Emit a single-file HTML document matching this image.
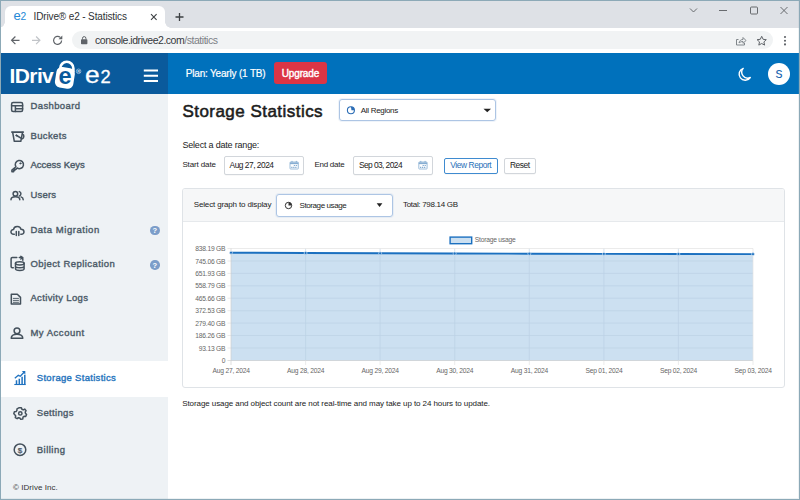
<!DOCTYPE html>
<html lang="en">
<head>
<meta charset="utf-8">
<title>IDrive e2 - Statistics</title>
<style>
*{box-sizing:border-box;margin:0;padding:0}
html,body{width:800px;height:500px;overflow:hidden;background:#fff}
body{font-family:"Liberation Sans",sans-serif;color:#222;position:relative}
.a{position:absolute}
.t{position:absolute;white-space:nowrap;line-height:1;font-family:"Liberation Sans",sans-serif}
.sb{-webkit-text-stroke:0.380px currentColor}
.b{font-weight:bold}
#tabstrip{left:0;top:0;width:800px;height:28px;background:#dee1e6}
#tab{left:5px;top:6px;width:160px;height:22px;background:#fff;border-radius:6px 6px 0 0}
#tab:before,#tab:after{content:"";position:absolute;bottom:0;width:6px;height:6px;background:radial-gradient(circle at 0 0,rgba(255,255,255,0) 5.500px,#fff 6px)}
#tab:before{left:-6px}
#tab:after{right:-6px;transform:scaleX(-1)}
#toolbar{left:0;top:28px;width:800px;height:25px;background:#fff}
#url{left:72px;top:31px;width:701px;height:18px;border-radius:9px;background:#f1f3f4}
#hdrL{left:0;top:53px;width:168px;height:40.500px;background:#0a5a9c}
#hdrR{left:168px;top:53px;width:632px;height:40.500px;background:#0071bc}
#upg{left:274px;top:62px;width:53px;height:22px;border-radius:3px;background:#dc3545}
#avatar{left:767.500px;top:63px;width:22px;height:22px;border-radius:50%;background:#fff}
#side{left:0;top:93.500px;width:167.500px;height:406.500px;background:#eef2f5}
#act{left:0;top:361px;width:167.500px;height:36px;background:#fff}
.q{width:9.500px;height:9.500px;border-radius:50%;background:#7b9dc9}
.sel{border:1px solid #adc5e4;border-radius:3px;background:#fff;box-shadow:0 0 0 1px rgba(168,195,226,.18)}
.inp{border:1px solid #d2d6db;box-shadow:0 0.500px 0.500px rgba(0,0,0,.06);border-radius:2px;background:#fff}
#card{left:182px;top:188px;width:603px;height:199.500px;border:1px solid #dfe3e7;border-radius:3px;background:#fff}
#cardh{left:0;top:0;width:601px;height:33px;background:#f6f7f8;border-bottom:1px solid #e6e9ec;border-radius:2px 2px 0 0}
#frame{left:0;top:0;width:800px;height:500px;border:1px solid #8ca9b7;box-shadow:inset -1px -1px 0 0 rgba(140,169,183,.15);pointer-events:none}
</style>
</head>
<body>
<div class="a" id="tabstrip"></div>
<div class="a" id="tab"></div>
<div class="a" id="toolbar"></div>
<div class="a" id="url"></div>
<div class="a" id="hdrL"></div>
<div class="a" id="hdrR"></div>
<div class="a" id="upg"></div>
<div class="a" id="avatar"></div>
<div class="a" id="side"></div>
<div class="a" id="act"></div>
<div class="a q" style="left:150px;top:225.500px"></div>
<div class="a q" style="left:150px;top:260px"></div>
<div class="a sel" style="left:339px;top:99px;width:157px;height:22px"></div>
<div class="a inp" style="left:224px;top:156px;width:80px;height:18.500px"></div>
<div class="a inp" style="left:353px;top:156px;width:80px;height:18.500px"></div>
<div class="a inp" style="left:443.500px;top:158px;width:54.500px;height:15.500px;border-color:#3f8bd0"></div>
<div class="a inp" style="left:504px;top:158px;width:32px;height:15.500px"></div>
<div class="a" id="card"><div class="a" id="cardh"></div></div>
<div class="a sel" style="left:276px;top:194px;width:117px;height:22.500px"></div>
<svg class="a" style="left:0;top:0" width="800" height="500" viewBox="0 0 800 500" fill="none">
<!-- browser chrome -->
<path d="M151 14.200L156.600 19.800M156.600 14.200L151 19.800" stroke="#3c4043" stroke-width="1.100"/>
<path d="M179.500 13V21M175.500 17H183.500" stroke="#3c4043" stroke-width="1.300"/>
<g stroke="#5a5d61" stroke-width="0.900">
<path d="M690 8.500L693.500 12L697 8.500"/>
<path d="M719 10.500H727"/>
<rect x="750.500" y="7" width="7" height="7" rx="1"/>
<path d="M780.500 7L787.500 14M787.500 7L780.500 14"/>
</g>
<g stroke="#5f6368" stroke-width="1.200">
<path d="M19.500 40.300H11.800M15.400 36.500L11.600 40.300L15.400 44.100"/>
<path d="M61.600 40.500A4 4 0 1 1 60.300 37.400"/>
</g>
<path d="M62.300 35.500V39.300H58.500Z" fill="#5f6368"/>
<path d="M32 40.300H39.700M36.100 36.500L39.900 40.300L36.100 44.100" stroke="#c1c4c8" stroke-width="1.200"/>
<rect x="81" y="39.300" width="6.400" height="4.900" rx="0.800" fill="#5f6368"/>
<path d="M82.500 39.500V38.300A1.700 1.700 0 0 1 85.900 38.300V39.500" stroke="#5f6368" stroke-width="1"/>
<g stroke="#80868b" stroke-width="1">
<path d="M738.500 39.500H736.500V45H744.500V43"/>
<path d="M739 43C739.500 40.500 741 39.500 743 39.500V37.500L746 40.500L743 43.300V41.500C741.500 41.500 740 42 739 43Z" stroke-linejoin="round"/>
</g>
<path d="M761.700 36.300L763.100 39.300L766.300 39.700L763.900 41.900L764.600 45.100L761.700 43.500L758.800 45.100L759.500 41.900L757.100 39.700L760.300 39.300Z" stroke="#5f6368" stroke-width="1" stroke-linejoin="round"/>
<circle cx="785" cy="37" r="1.050" fill="#5f6368"/><circle cx="785" cy="40.700" r="1.050" fill="#5f6368"/><circle cx="785" cy="44.400" r="1.050" fill="#5f6368"/>
<!-- logo -->
<path d="M60.200 69.500V68.400A6.600 6.600 0 0 1 73.400 68.400V72" stroke="#fff" stroke-width="2.600"/>
<rect x="55.600" y="67.600" width="18.600" height="20.800" rx="5.500" fill="#fff" transform="rotate(9 65.600 77.800)"/>
<text x="58.400" y="83.600" font-family="Liberation Sans,sans-serif" font-size="23.500" font-weight="bold" fill="#0a5a9c">e</text>
<circle cx="78.600" cy="71.300" r="2.300" stroke="#c9dcec" stroke-width="0.600"/>
<text x="77.200" y="72.800" font-family="Liberation Sans,sans-serif" font-size="4" font-weight="bold" fill="#c9dcec">R</text>
<path d="M143.800 70.500H158M143.800 75.800H158M143.800 81.100H158" stroke="#fff" stroke-width="2"/>
<!-- moon -->
<path d="M743.200 68.400A6.100 6.100 0 1 0 750.300 77.500A5.900 5.900 0 0 1 743.200 68.400Z" stroke="#fff" stroke-width="1.400" stroke-linejoin="round"/>
<!-- help ? -->
<text x="154.750" y="233.300" font-family="Liberation Sans,sans-serif" font-size="7.500" font-weight="bold" fill="#fff" text-anchor="middle">?</text>
<text x="154.750" y="267.800" font-family="Liberation Sans,sans-serif" font-size="7.500" font-weight="bold" fill="#fff" text-anchor="middle">?</text>
<!-- sidebar icons -->
<g stroke="#44515c" stroke-width="1.500" stroke-linecap="round" stroke-linejoin="round">
<!-- dashboard -->
<rect x="11.600" y="102.400" width="11" height="9" rx="1.500"/>
<path d="M11.600 105.800H22.600M15.400 105.800V111.400M15.400 108.700H22.600"/>
<!-- bucket -->
<path d="M11.800 132.100H23.300" stroke-width="1.600"/>
<path d="M12.700 132.500L14.300 141.300H20.800L22.500 132.500"/>
<path d="M22.600 134.200C24.300 134.600 24.300 137.800 22.300 138.800L16.600 135.500"/>
<circle cx="16.400" cy="135.400" r="0.700" fill="#46535e" stroke-width="0.800"/>
<!-- key -->
<path d="M15.900 166.700A4.100 4.100 0 1 1 17.200 168L16 169.300H14.800V170.500H13.600V171.700H11.900V170.100Z"/>
<circle cx="20.400" cy="163.400" r="0.700" fill="#44515c" stroke-width="0.700"/>
<!-- users -->
<circle cx="15.400" cy="193.800" r="2.300"/>
<path d="M11 199.800C11 195.800 19.800 195.800 19.800 199.800"/>
<path d="M19.300 191.600A2.300 2.300 0 0 1 19.300 196"/>
<path d="M21 196.900C22.300 197.300 23.200 198.300 23.200 199.800"/>
<!-- cloud -->
<path d="M14.300 234.300H13.800C9.800 234.300 10.300 229.300 13.600 229.500C13.800 225.500 20.300 225.300 21 229.300C24.800 229.300 25 234.300 21.300 234.300H20.800"/>
<path d="M16.300 235.400V231.500M18.800 235.400V231.500"/>
<!-- object replication -->
<path d="M13.300 267.800H12.300A1.200 1.200 0 0 1 11.100 266.600V258.800A1.200 1.200 0 0 1 12.300 257.600H16.800"/>
<path d="M19.300 257.600H21.600A1.200 1.200 0 0 1 22.800 258.800V260.300"/>
<path d="M20.800 256.300L22.800 257.600L20.800 259"/>
<ellipse cx="19.800" cy="263.300" rx="4.300" ry="1.600"/>
<path d="M15.500 263.300V268.800C15.500 271 24.100 271 24.100 268.800V263.300M15.500 266.200C15.500 268.200 24.100 268.200 24.100 266.200"/>
<!-- activity logs -->
<path d="M11.300 294.300H17.300L20.500 297.400V304H11.300Z"/>
<path d="M13.300 298.400H18.500M13.300 300.400H18.500M13.300 302.300H18.500" stroke-width="0.900"/>
<!-- my account -->
<circle cx="17" cy="330.800" r="2.900"/>
<path d="M11.200 338.300C11.200 332.800 22.800 332.800 22.800 338.300Z"/>
<!-- settings -->
<circle cx="20.300" cy="413.400" r="1.700"/>
<path d="M19.200 407.700H21.400L21.900 409.300L23.200 409.900L24.700 409.100L26.100 410.700L25.200 412.100L25.500 413.400L26.600 414.500L25.700 416.500L24.100 416.300L23 417.200L22.800 418.900L20.700 419.300L19.800 417.900L18.400 417.700L17.100 418.700L15.300 417.600L15.700 416L14.900 414.800L13.800 413.800L14.400 411.700L16.100 411.600L16.900 410.400L17 408.800Z"/>
<!-- billing -->
<circle cx="20" cy="449.700" r="5.800"/>
</g>
<text x="20" y="452.700" font-family="Liberation Sans,sans-serif" font-size="8" fill="#44515c" stroke="#44515c" stroke-width="0.250" text-anchor="middle">$</text>
<!-- storage stats icon -->
<g stroke="#1f72c0" stroke-width="1.500">
<path d="M16.500 384V380.300M19.300 384V378.800M22.100 384V376.800M24.800 384V374.800" />
<path d="M14.300 384.500H25.800" stroke-width="1.100"/>
<path d="M14.800 378.300L18.300 375.300L20.300 376.300L24.300 372" stroke-width="1.300"/>
</g>
<path d="M21.800 371H25.300V374.500Z" fill="#1f72c0"/>
<!-- main icons -->
<circle cx="350.900" cy="110.300" r="3.500" stroke="#2a6cb5" stroke-width="1.100"/>
<path d="M350.900 106.800A3.500 3.500 0 0 1 354.400 110.300H351.500Z" fill="#2a6cb5"/>
<path d="M483.500 108.800H491L487.250 112.300Z" fill="#222"/>
<circle cx="288.500" cy="205.500" r="3.200" stroke="#333" stroke-width="1"/>
<path d="M288.500 202.300A3.200 3.200 0 0 1 291.700 205.500H288.500Z" fill="#333"/>
<path d="M376.700 203.300H382.400L379.550 207Z" fill="#222"/>
<!-- calendar icons -->
<g stroke="#86add2">
<rect x="290" y="162" width="8.300" height="7" rx="0.600" stroke-width="0.800"/>
<path d="M290 163.300H298.300" stroke-width="1.700"/>
<path d="M292 160.900V162.400M296.300 160.900V162.400" stroke-width="1"/>
<path d="M293.800 165.500H297.300M291.200 167.400H297.300" stroke-dasharray="1.300 0.700" stroke-width="1.200"/>
</g>
<g stroke="#86add2" transform="translate(128.800 0)">
<rect x="290" y="162" width="8.300" height="7" rx="0.600" stroke-width="0.800"/>
<path d="M290 163.300H298.300" stroke-width="1.700"/>
<path d="M292 160.900V162.400M296.300 160.900V162.400" stroke-width="1"/>
<path d="M293.800 165.500H297.300M291.200 167.400H297.300" stroke-dasharray="1.300 0.700" stroke-width="1.200"/>
</g>
</svg>

<div class="t" id="fav" style="left:13.600px;top:9.200px;font-size:13px;letter-spacing:-0.300px;color:#2488d6">e<span style="font-size:10.200px">2</span></div>
<div class="t" id="logo2" style="left:84.800px;top:64px;font-size:23.500px;color:#fff;-webkit-text-stroke:0.300px #fff"><span style="display:inline-block;transform:scaleX(1.120);transform-origin:0 50%;margin-right:2.600px">e</span><span style="font-size:18.300px">2</span></div>
<svg class="a" style="left:0;top:0" width="800" height="500" viewBox="0 0 800 500" font-family="Liberation Sans,sans-serif" font-size="6.700" letter-spacing="-0.220" fill="#666">
<path d="M231 252.700L305.600 253L380.100 253.300L454.700 253.500L529.300 253.700L603.900 253.900L678.400 254L753 254.100V360.700H231Z" fill="#cce0f1"/>
<g stroke="#b9cfe2" stroke-width="0.700" opacity="0.800">
<path d="M231 261H753M231 273.400H753M231 285.800H753M231 298.200H753M231 310.700H753M231 323.100H753M231 335.500H753M231 348H753"/>
<path d="M305.600 248.500V360.500M380.100 248.500V360.500M454.700 248.500V360.500M529.300 248.500V360.500M603.900 248.500V360.500M678.400 248.500V360.500"/>
</g>
<g stroke="#e3e3e3" stroke-width="0.700">
<path d="M227.500 248.500H753M227.500 261H231M227.500 273.400H231M227.500 285.800H231M227.500 298.200H231M227.500 310.700H231M227.500 323.100H231M227.500 335.500H231M227.500 348H231"/>
<path d="M227.500 360.500H753" stroke="#cfcfcf"/>
<path d="M231 248.500V365" stroke="#cfcfcf"/>
<path d="M305.600 360.500V365M380.100 360.500V365M454.700 360.500V365M529.300 360.500V365M603.900 360.500V365M678.400 360.500V365M753 248.500V365"/>
</g>
<path d="M231 252.700L305.600 253L380.100 253.300L454.700 253.500L529.300 253.700L603.900 253.900L678.400 254L753 254.100" fill="none" stroke="#1b70c0" stroke-width="1.900"/>
<g fill="#1b70c0" stroke="#e4eff8" stroke-width="0.600">
<circle cx="231" cy="252.700" r="1.500"/><circle cx="305.600" cy="253" r="1.500"/><circle cx="380.100" cy="253.300" r="1.500"/><circle cx="454.700" cy="253.500" r="1.500"/><circle cx="529.300" cy="253.700" r="1.500"/><circle cx="603.900" cy="253.900" r="1.500"/><circle cx="678.400" cy="254" r="1.500"/><circle cx="753" cy="254.100" r="1.500"/>
</g>
<rect x="450.100" y="237.100" width="21.600" height="6.600" fill="#cce0f1" stroke="#1b70c0" stroke-width="1.400"/>
<text x="474.800" y="242.400">Storage usage</text>
<g text-anchor="end">
<text x="225.300" y="251">838.19 GB</text>
<text x="225.300" y="263.500">745.06 GB</text>
<text x="225.300" y="275.900">651.93 GB</text>
<text x="225.300" y="288.300">558.79 GB</text>
<text x="225.300" y="300.700">465.66 GB</text>
<text x="225.300" y="313.200">372.53 GB</text>
<text x="225.300" y="325.600">279.40 GB</text>
<text x="225.300" y="338">186.26 GB</text>
<text x="225.300" y="350.500">93.13 GB</text>
<text x="225.300" y="362.900">0</text>
</g>
<g text-anchor="middle">
<text x="231.200" y="373">Aug 27, 2024</text>
<text x="305.700" y="373">Aug 28, 2024</text>
<text x="380.200" y="373">Aug 29, 2024</text>
<text x="454.800" y="373">Aug 30, 2024</text>
<text x="529.400" y="373">Aug 31, 2024</text>
<text x="604" y="373">Sep 01, 2024</text>
<text x="678.500" y="373">Sep 02, 2024</text>
<text x="753.100" y="373">Sep 03, 2024</text>
</g>
</svg>

<div class="t b" id="lg1" style="left:9.60px;top:64.60px;font-size:21px;letter-spacing:-0.622px;color:#fff">IDriv</div>
<div class="t" id="t_tab" style="left:33.50px;top:12px;font-size:10px;letter-spacing:-0.127px;color:#2e3134">IDrive® e2 - Statistics</div>
<div class="t" id="t_url" style="left:95px;top:35px;font-size:10.5px;letter-spacing:-0.468px;color:#35383b">console.idrivee2.com<span style="color:#7c8085">/statitics</span></div>
<div class="t" id="t_plan" style="-webkit-text-stroke:0.200px #fff;left:185.75px;top:69px;font-size:10px;letter-spacing:-0.185px;color:#fff">Plan: Yearly (1 TB)</div>
<div class="t sb" id="t_upg" style="-webkit-text-stroke-width:0.400px;left:281.80px;top:68.50px;font-size:10px;letter-spacing:-0.161px;color:#fff">Upgrade</div>
<div class="t" id="t_av" style="left:775.60px;top:66.40px;font-size:14px;letter-spacing:-0.619px;color:#1a66b0">s</div>
<div class="t sb" id="n1" style="left:30.50px;top:100.50px;font-size:9.5px;letter-spacing:0.377px;color:#4c5b68">Dashboard</div>
<div class="t sb" id="n2" style="left:30.50px;top:130.50px;font-size:9.5px;letter-spacing:0.367px;color:#4c5b68">Buckets</div>
<div class="t sb" id="n3" style="left:30.40px;top:160.40px;font-size:9.5px;letter-spacing:0.002px;color:#4c5b68">Access Keys</div>
<div class="t sb" id="n4" style="left:30.40px;top:190.31px;font-size:9.5px;letter-spacing:0.197px;color:#4c5b68">Users</div>
<div class="t sb" id="n5" style="left:30.40px;top:224.90px;font-size:9.5px;letter-spacing:0.539px;color:#4c5b68">Data Migration</div>
<div class="t sb" id="n6" style="left:30.40px;top:258.81px;font-size:9.5px;letter-spacing:0.429px;color:#4c5b68">Object Replication</div>
<div class="t sb" id="n7" style="left:30.40px;top:293.31px;font-size:9.5px;letter-spacing:0.355px;color:#4c5b68">Activity Logs</div>
<div class="t sb" id="n8" style="left:30.40px;top:327.90px;font-size:9.5px;letter-spacing:0.521px;color:#4c5b68">My Account</div>
<div class="t sb" id="n9" style="left:36.75px;top:372.81px;font-size:9.5px;letter-spacing:0.302px;color:#2574bd">Storage Statistics</div>
<div class="t sb" id="n10" style="left:36.75px;top:408.40px;font-size:9.5px;letter-spacing:0.346px;color:#4c5b68">Settings</div>
<div class="t sb" id="n11" style="left:36.75px;top:444.81px;font-size:9.5px;letter-spacing:0.483px;color:#4c5b68">Billing</div>
<div class="t" id="t_copy" style="left:13px;top:484px;font-size:8px;letter-spacing:0.056px;color:#333">© IDrive Inc.</div>
<div class="t sb" id="t_h1" style="-webkit-text-stroke-width:0.550px;left:182.40px;top:102.50px;font-size:17px;letter-spacing:0.466px;color:#1c1c1c">Storage Statistics</div>
<div class="t" id="t_reg" style="left:360.80px;top:106.50px;font-size:8px;letter-spacing:-0.307px;color:#222">All Regions</div>
<div class="t" id="t_sdr" style="left:182.40px;top:140.81px;font-size:9px;letter-spacing:-0.192px;color:#222">Select a date range:</div>
<div class="t" id="t_sd" style="left:182.40px;top:161.21px;font-size:8px;letter-spacing:-0.122px;color:#222">Start date</div>
<div class="t" id="t_d1" style="left:229.60px;top:160.60px;font-size:8.4px;letter-spacing:-0.494px;color:#222">Aug 27, 2024</div>
<div class="t" id="t_ed" style="left:314.50px;top:161.21px;font-size:8px;letter-spacing:-0.277px;color:#222">End date</div>
<div class="t" id="t_d2" style="left:358.90px;top:160.60px;font-size:8.4px;letter-spacing:-0.558px;color:#222">Sep 03, 2024</div>
<div class="t" id="t_vr" style="left:450.20px;top:160.60px;font-size:8.4px;letter-spacing:-0.397px;color:#1f6fb8">View Report</div>
<div class="t" id="t_rs" style="left:510px;top:160.60px;font-size:8.4px;letter-spacing:-0.470px;color:#222">Reset</div>
<div class="t" id="t_sg" style="left:193.75px;top:201px;font-size:8px;letter-spacing:-0.150px;color:#222">Select graph to display</div>
<div class="t" id="t_su" style="left:299.50px;top:201.50px;font-size:8px;letter-spacing:-0.404px;color:#222">Storage usage</div>
<div class="t" id="t_tot" style="left:403px;top:201px;font-size:8px;letter-spacing:-0.306px;color:#222">Total: 798.14 GB</div>
<div class="t" id="t_note" style="left:182.20px;top:400px;font-size:8px;letter-spacing:-0.082px;color:#222">Storage usage and object count are not real-time and may take up to 24 hours to update.</div>
<div class="a" id="frame"></div>
</body>
</html>
